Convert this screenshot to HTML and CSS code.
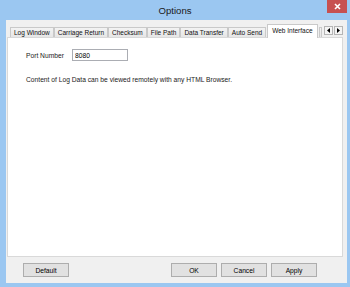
FILE: index.html
```html
<!DOCTYPE html>
<html lang="en">
<head>
    <meta charset="UTF-8">
    <title>Options</title>
    <link rel="stylesheet" href="styles.css">
</head>
<body>

<div class="window">
    <div class="titlebar">
        <span class="title">Options</span>
        <button class="close" aria-label="Close">
            <svg width="7" height="7" viewBox="0 0 7 7"><path d="M1 1L6 6M6 1L1 6" stroke="#fff" stroke-width="1.6"/></svg>
        </button>
    </div>

    <div class="client">
        <div class="tabs">
            <div class="tab">Log Window</div>
            <div class="tab">Carriage Return</div>
            <div class="tab">Checksum</div>
            <div class="tab">File Path</div>
            <div class="tab">Data Transfer</div>
            <div class="tab">Auto Send</div>
            <div class="tab selected">Web Interface</div>
            <div class="tab cut"></div>
            <div class="scroller">
                <span class="arrow"><svg width="3" height="5" viewBox="0 0 3 5"><path d="M3 0V5L0 2.5Z" fill="#000"/></svg></span>
                <span class="arrow"><svg width="3" height="5" viewBox="0 0 3 5"><path d="M0 0V5L3 2.5Z" fill="#000"/></svg></span>
            </div>
        </div>

        <div class="panel">
            <div class="field">
                <label for="port">Port Number</label>
                <input id="port" type="text" value="8080">
            </div>
            <p class="info">Content of Log Data can be viewed remotely with any HTML Browser.</p>
        </div>

        <div class="buttons">
            <button class="btn">Default</button>
            <span class="spacer"></span>
            <button class="btn">OK</button>
            <button class="btn">Cancel</button>
            <button class="btn">Apply</button>
        </div>
    </div>
</div>

</body>
</html>
```

FILE: styles.css
```css
body {
    margin: 0;
    font-family: "Liberation Sans", Arial, sans-serif;
    font-size: 6.7px;
    color: #000;
}

.window {
    width: 350px;
    height: 287px;
    background: #9bc7f1;
    padding: 0 3px 4px 6px;
    box-sizing: border-box;
    display: flex;
    flex-direction: column;
}

.titlebar {
    height: 20px;
    display: flex;
    align-items: center;
    justify-content: center;
    position: relative;
}

.title {
    font-size: 9.6px;
    color: #1a1a1a;
    margin-left: -3px;
}

.close {
    position: absolute;
    top: 0;
    right: 0;
    width: 20px;
    height: 13px;
    border: none;
    padding: 0;
    background: #c75050;
    display: flex;
    align-items: center;
    justify-content: center;
}

.client {
    flex: 1;
    background: #f0f0f0;
    padding: 4px 4px 6px 1px;
    display: flex;
    flex-direction: column;
}

.tabs {
    height: 13px;
    display: flex;
    align-items: flex-end;
    padding-left: 3px;
    position: relative;
    z-index: 1;
    font-size: 6.5px;
}

.tab {
    height: 10px;
    line-height: 9px;
    padding: 0 3px;
    border: 1px solid #c9c9c9;
    border-bottom: none;
    box-sizing: border-box;
    background: linear-gradient(#f3f3f3, #e6e6e6);
    color: #111;
    white-space: nowrap;
}

.tab.selected {
    height: 14px;
    line-height: 11px;
    background: #fff;
    margin: 0 1px -1px 1px;
    padding: 0 4px;
    position: relative;
}

.tab.cut {
    width: 4px;
    padding: 0;
}

.scroller {
    display: flex;
    margin: 0 0 1px 2px;
    position: relative;
    top: -1px;
}

.arrow {
    width: 9px;
    height: 9px;
    border: 1px solid #b5b5b5;
    background: #f4f4f4;
    box-sizing: border-box;
    display: flex;
    align-items: center;
    justify-content: center;
}

.arrow + .arrow {
    margin-left: 1px;
}

.panel {
    flex: 1;
    background: #fff;
    border: 1px solid #d9d9d9;
    padding: 11px 0 0 18px;
}

.field {
    display: flex;
    align-items: center;
}

.field label {
    width: 46px;
    color: #1a1a1a;
}

.field input {
    width: 56px;
    height: 12px;
    box-sizing: border-box;
    border: 1px solid #abadb3;
    padding: 0 2px;
    font: inherit;
    color: #000;
    outline: none;
}

.info {
    margin: 15px 0 0;
    line-height: 8px;
    color: #1a1a1a;
}

.buttons {
    height: 14px;
    margin-top: 6px;
    padding: 0 26px 0 16px;
    display: flex;
    gap: 4px;
}

.spacer {
    flex: 1;
}

.btn {
    width: 46px;
    height: 14px;
    padding: 0;
    border: 1px solid #adadad;
    background: #e1e1e1;
    font: inherit;
    color: #000;
}
```
